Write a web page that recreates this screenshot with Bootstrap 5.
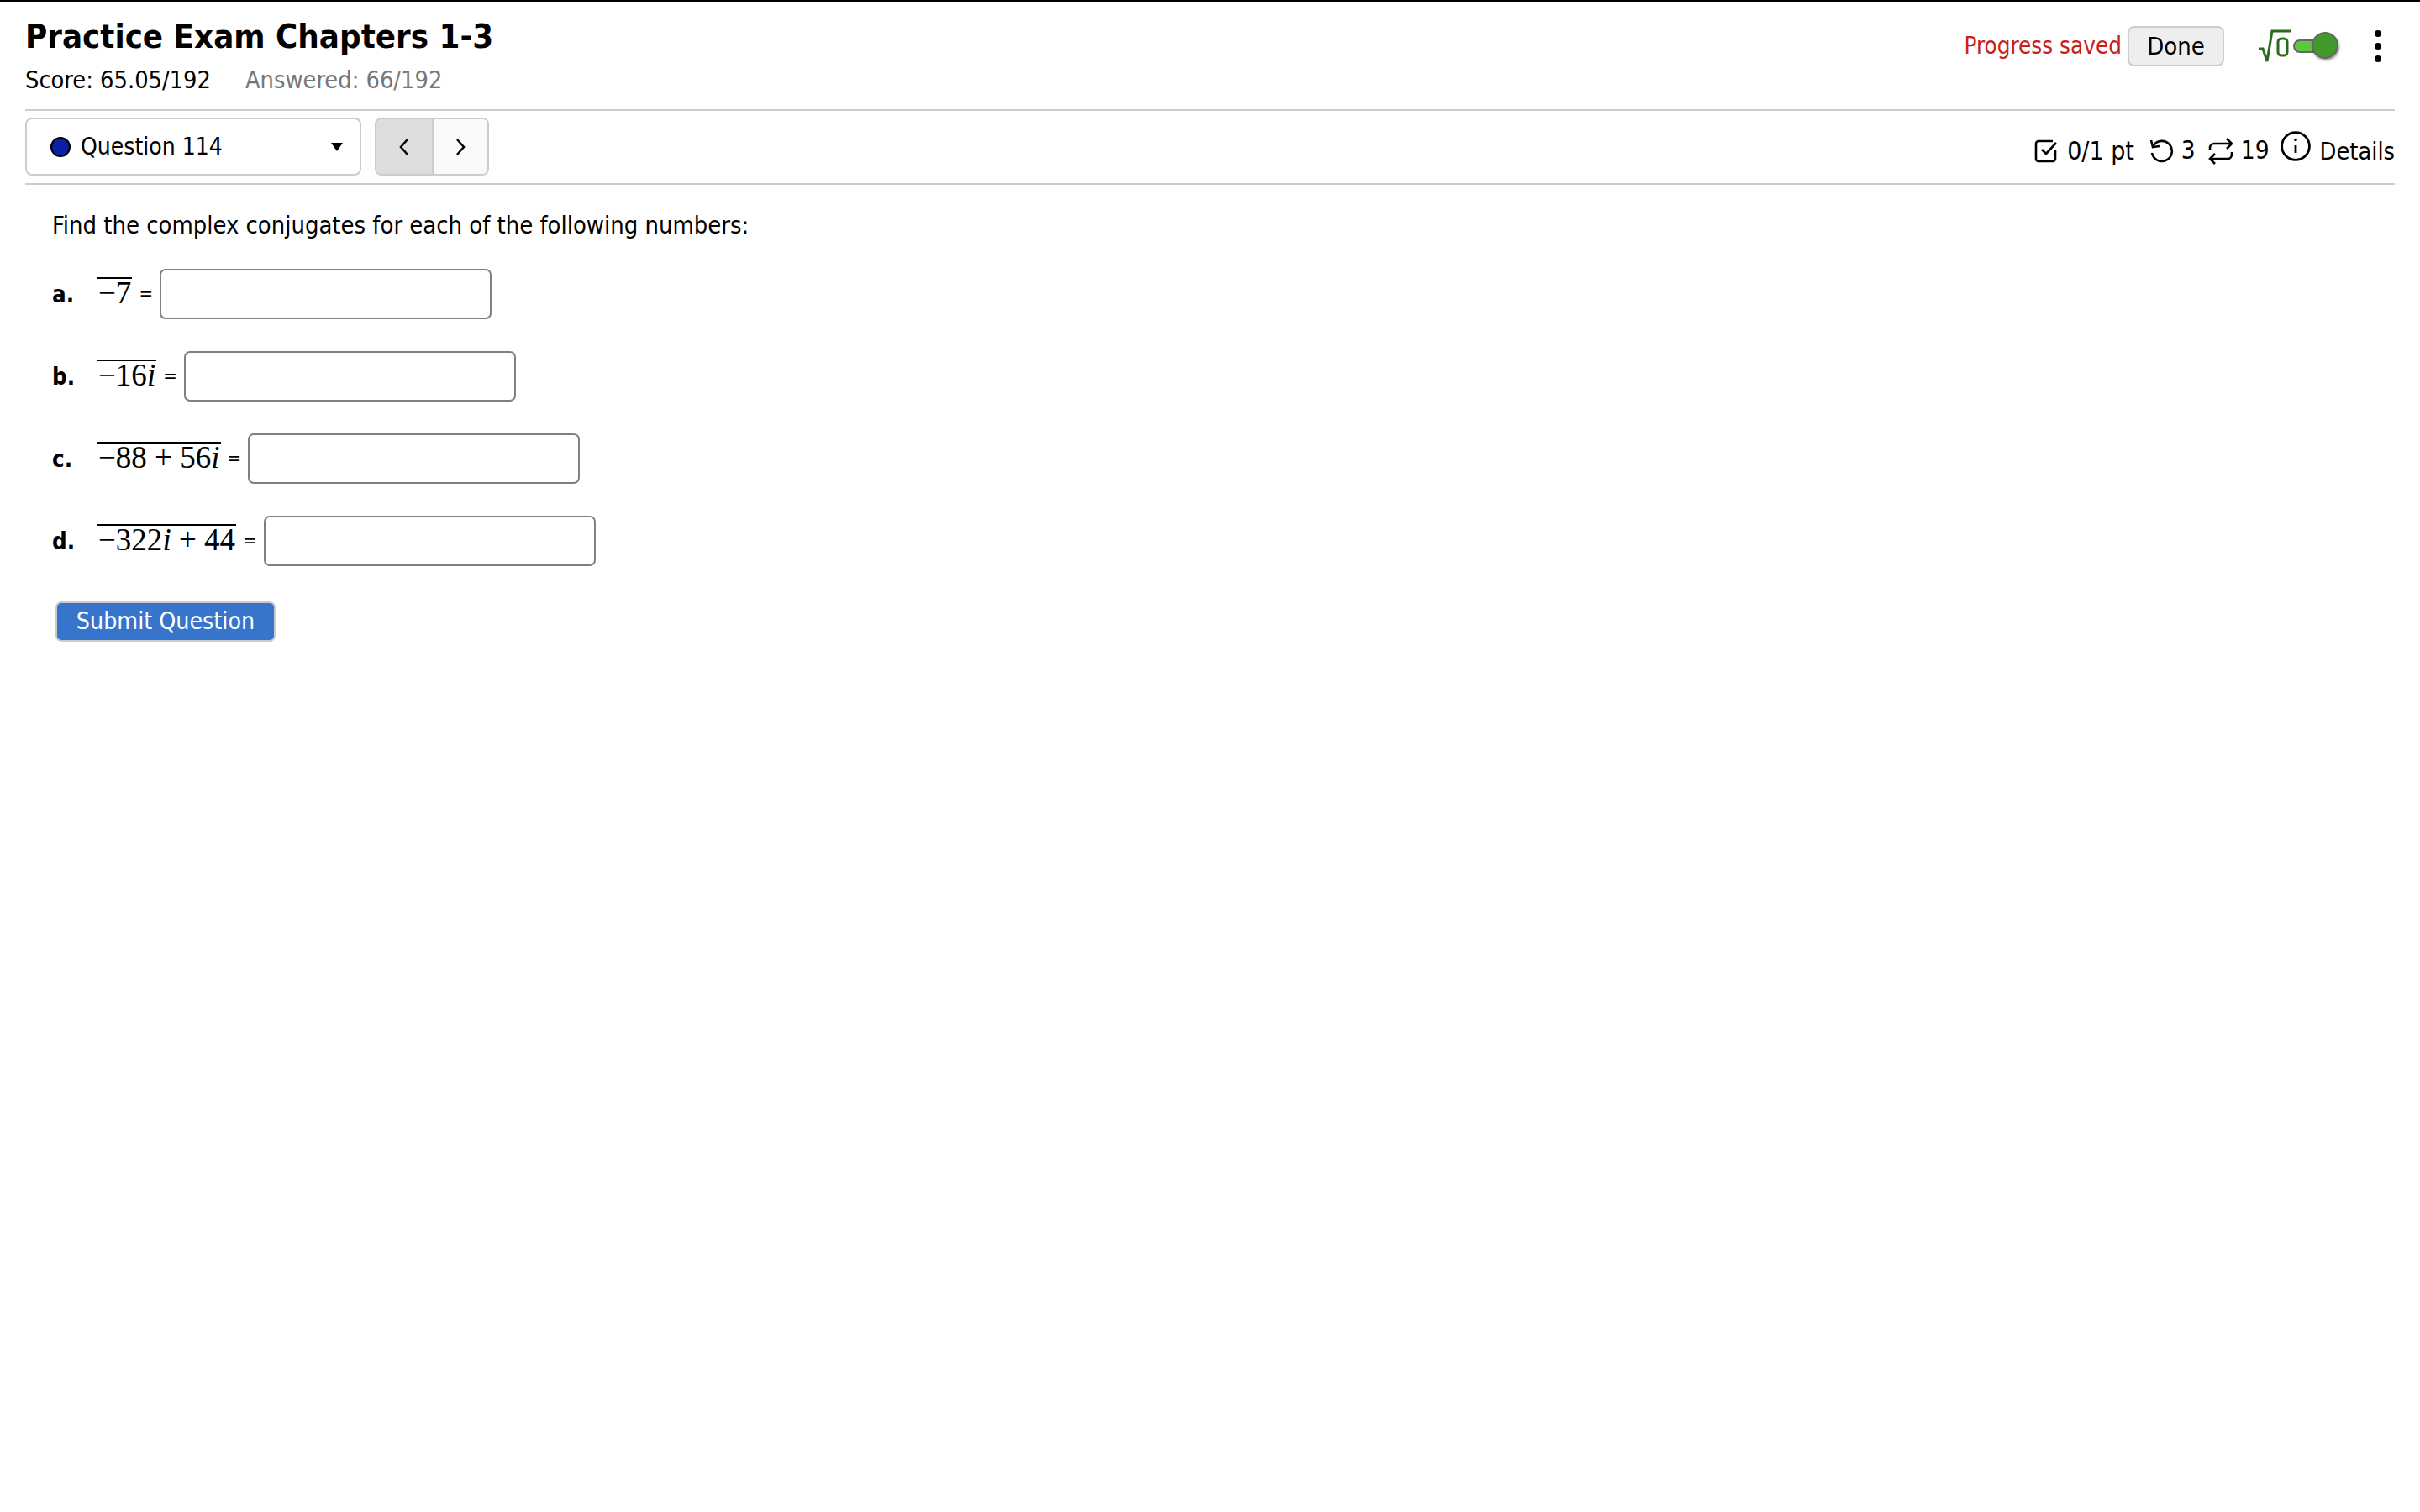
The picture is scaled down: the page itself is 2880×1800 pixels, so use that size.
<!DOCTYPE html>
<html lang="en">
<head>
<meta charset="utf-8">
<title>Practice Exam</title>
<link href="https://cdn.jsdelivr.net/npm/bootstrap@5.3.0/dist/css/bootstrap.min.css" rel="stylesheet">
<style>
html,body{background:#fff}
body{font-family:"DejaVu Sans Condensed","DejaVu Sans",sans-serif;font-size:30px;line-height:1.2;color:#000;border-top:2px solid #000;min-height:1800px}
.page-wrap{padding:0 30px}
.head-row{height:128px}
.exam-title{font-size:39.8px;font-weight:700;line-height:1;margin:22px 0 0}
.score-line{margin-top:14px;font-size:28.7px}
.answered{color:#777;margin-left:41px}
.saved{color:#c8211b;font-size:27.600px}
.done-btn{width:115px;height:48px;font-size:29px;line-height:1;background:#eee;border:2px solid #ccc;border-radius:8px;color:#000;padding:0;margin-left:7px}
.sqrt-mark{color:#2a6a1c;margin-left:40px;width:40px}
.switch-box{position:relative;width:56px;height:34px;margin-left:2px}
.switch-track{position:absolute;left:0;top:9px;width:42px;height:16px;background:#5cc83d;border:2px solid #666;border-radius:8px}
.switch-knob{position:absolute;left:22px;top:0;width:32px;height:32px;background:#429a2d;border:2px solid #666;border-radius:50%;box-shadow:1px 2px 3px rgba(0,0,0,.4)}
.dots-btn{margin-left:41px;margin-right:16px;width:8px}
.dots-btn span{display:block;width:8px;height:8px;border-radius:50%;background:#000;margin-bottom:7px}
.dots-btn span:last-child{margin-bottom:0}
.top-tools{padding-top:29px}
.nav-row{border-top:2px solid #ccc;border-bottom:2px solid #ccc;height:90px;padding-top:8px}
.q-select{width:400px;height:69px;border:2px solid #ccc;border-radius:8px;padding:0 20px 0 28px;font-size:28px}
.q-dot{width:24px;height:24px;border-radius:50%;background:#0a1fa5;border:2px solid #000;margin-right:12px}
.q-caret{margin-left:auto;width:0;height:0;border-left:7.5px solid transparent;border-right:7.5px solid transparent;border-top:10px solid #000}
.pager{margin-left:16px;height:69px;border:2px solid #ccc;border-radius:8px;overflow:hidden}
.pager div{width:64px;height:100%}
.pager div:first-child{background:#ddd;border-right:2px solid #ccc;width:68px}
.pager div:last-child{background:#f9f9f9}
.meta{padding-top:22px;font-size:29.5px}
.meta svg{display:block}
.pts{font-size:30px;margin-left:11px;margin-right:17px}
.tally{margin-left:9px;margin-right:15px}
.tally-last{margin-left:9px;margin-right:13px}
.info-mark{margin-top:-12px}
.details{font-size:28.7px;margin-left:11px}
.q-body{padding:0 32px}
.q-text{margin:30px 0 0;line-height:36px;font-size:28.9px}
.part{height:60px;margin-top:38px}
.q-text + .part{margin-top:34px}
.part-label{width:53px;font-weight:700;font-size:27.5px}
.math{font-family:"Liberation Serif",serif;font-size:37px;border-top:2px solid #000;line-height:33px;padding:0 1px 0 2px;margin-right:8px;white-space:nowrap;margin-top:-6px}
.math i{font-size:37px}
.eq{font-size:22px;margin-right:8px}
.ans{width:395px;height:60px;border:2px solid #808080;border-radius:7px;background:#fff;padding:0 8px}
.submit-btn{display:block;margin:42px 0 0 4px;width:262px;height:48px;background:#3775cc;border:2px solid #ccc;border-radius:7px;color:#fff;font-size:28.3px;line-height:1;padding:0}
</style>
</head>
<body>
<div class="page-wrap">
  <div class="head-row d-flex justify-content-between">
    <div>
      <h1 class="exam-title">Practice Exam Chapters 1-3</h1>
      <div class="score-line">Score: 65.05/192<span class="answered">Answered: 66/192</span></div>
    </div>
    <div class="top-tools d-flex align-items-center align-self-start">
      <span class="saved">Progress saved</span>
      <button class="done-btn btn" type="button">Done</button>
      <svg class="sqrt-mark" viewBox="0 0 40 42" height="42" fill="none" stroke="#2a6a1c" stroke-width="3"><path d="M1 24h5l5 15 6-36h22"/><rect x="24" y="12" width="11" height="20" rx="4"/></svg>
      <div class="switch-box"><div class="switch-track"></div><div class="switch-knob"></div></div>
      <div class="dots-btn"><span></span><span></span><span></span></div>
    </div>
  </div>
  <div class="nav-row d-flex justify-content-between">
    <div class="d-flex">
      <div class="q-select d-flex align-items-center"><span class="q-dot"></span>Question 114<span class="q-caret"></span></div>
      <div class="pager d-flex">
        <div class="d-flex align-items-center justify-content-center"><svg width="14" height="22" viewBox="0 0 14 22" fill="none" stroke="#000" stroke-width="2.5"><path d="M11 2 3 11l8 9"/></svg></div>
        <div class="d-flex align-items-center justify-content-center"><svg width="14" height="22" viewBox="0 0 14 22" fill="none" stroke="#000" stroke-width="2.5"><path d="m3 2 8 9-8 9"/></svg></div>
      </div>
    </div>
    <div class="meta d-flex align-items-center align-self-start">
      <svg width="28" height="28" viewBox="0 0 28 28" fill="none" stroke="#000" stroke-width="2.6"><path d="M25 13v10a3 3 0 0 1-3 3H5a3 3 0 0 1-3-3V5a3 3 0 0 1 3-3h17"/><path d="m9 12 5 5L26 4"/></svg>
      <span class="pts">0/1 pt</span>
      <svg width="30" height="30" viewBox="0 0 30 30" fill="none" stroke="#000" stroke-width="2.6"><path d="M6 8a12 12 0 1 1-2 9"/><path d="M3 2l2 8 8-1"/></svg>
      <span class="tally">3</span>
      <svg width="30" height="32" viewBox="0 0 30 32" fill="none" stroke="#000" stroke-width="2.6"><path d="M22 1l6 6-6 6"/><path d="M2 15v-3a5 5 0 0 1 5-5h20"/><path d="M8 31l-6-6 6-6"/><path d="M28 17v3a5 5 0 0 1-5 5H3"/></svg>
      <span class="tally-last">19</span>
      <svg class="info-mark" width="36" height="36" viewBox="0 0 36 36" fill="none" stroke="#000" stroke-width="2.8"><circle cx="18" cy="18" r="16.4"/><path d="M18 17v9"/><circle cx="18" cy="10.500" r="1.800" fill="#000" stroke="none"/></svg>
      <span class="details">Details</span>
    </div>
  </div>
  <div class="q-body">
    <p class="q-text">Find the complex conjugates for each of the following numbers:</p>
    <div class="part d-flex align-items-center"><span class="part-label">a.</span><span class="math">&minus;7</span><span class="eq">=</span><span class="ans"></span></div>
    <div class="part d-flex align-items-center"><span class="part-label">b.</span><span class="math">&minus;16<i>i</i></span><span class="eq">=</span><span class="ans"></span></div>
    <div class="part d-flex align-items-center"><span class="part-label">c.</span><span class="math">&minus;88 + 56<i>i</i></span><span class="eq">=</span><span class="ans"></span></div>
    <div class="part d-flex align-items-center"><span class="part-label">d.</span><span class="math">&minus;322<i>i</i> + 44</span><span class="eq">=</span><span class="ans"></span></div>
    <button class="submit-btn btn" type="button">Submit Question</button>
  </div>
</div>
<script src="https://cdn.jsdelivr.net/npm/bootstrap@5.3.0/dist/js/bootstrap.bundle.min.js"></script>
</body>
</html>
